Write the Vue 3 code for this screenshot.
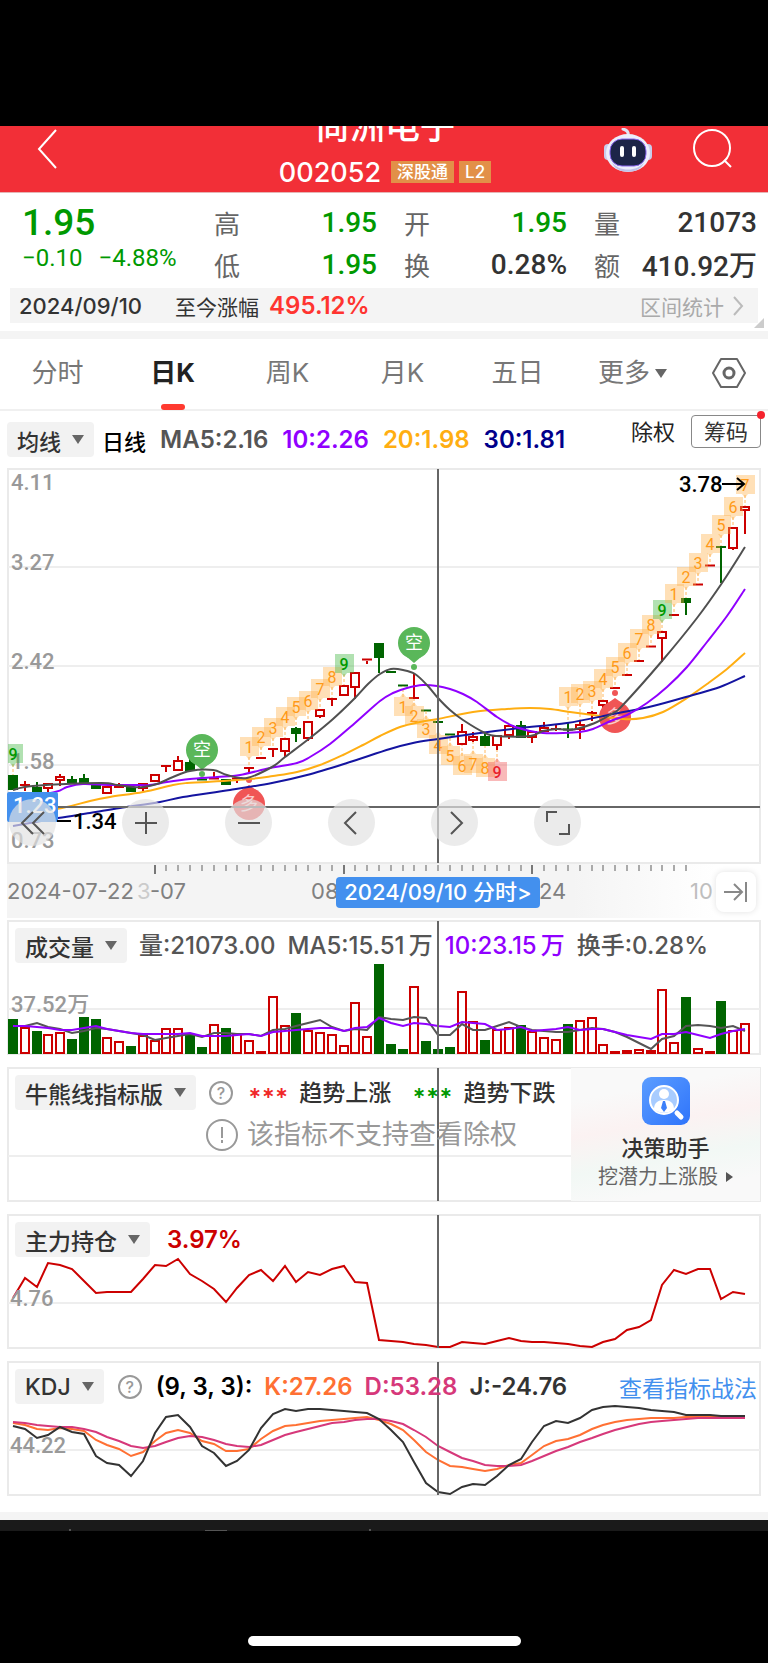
<template>
  <div class="screen">
    <header class="top">
      <button class="icon-btn" aria-label="返回">
        <svg width="22" height="42" viewBox="0 0 22 42"><path d="M20 2 3 21 20 40" fill="none" stroke="#fff" stroke-width="2" /></svg>
      </button>
      <div class="title">
        <h1>尚洲电子</h1>
        <p><span class="code">002052</span><span class="badge">深股通</span><span class="badge">L2</span></p>
      </div>
      <div class="top-right">
        <button class="icon-btn" aria-label="助手">
          <svg width="50" height="46" viewBox="0 0 50 46">
            <path d="M25 8c1-4-1-6-5-7" fill="none" stroke="#dfe3f5" stroke-width="3" stroke-linecap="round" />
            <rect x="1" y="16" width="8" height="16" rx="4" fill="#c9cdec" />
            <rect x="41" y="16" width="8" height="16" rx="4" fill="#c9cdec" />
            <ellipse cx="25" cy="25" rx="22" ry="19" fill="#eceefb" />
            <path d="M9 34c6 10 26 10 32 0-3 13-29 13-32 0z" fill="#bfc3ea" />
            <rect x="7" y="11" width="36" height="27" rx="12" fill="#1d2548" stroke="#8a66f0" stroke-width="1" />
            <rect x="17" y="18" width="4" height="11" rx="2" fill="#fff" />
            <rect x="29" y="18" width="4" height="11" rx="2" fill="#fff" />
          </svg>
        </button>
        <button class="icon-btn" aria-label="搜索">
          <svg width="42" height="42" viewBox="0 0 42 42" fill="none" stroke="#fff" stroke-width="2"><circle cx="20" cy="20" r="18" /><path d="m32 32 7 7" /></svg>
        </button>
      </div>
    </header>

    <section class="quote">
      <div class="quote-grid">
        <div class="main-price">
          <strong>1.95</strong>
          <div class="change"><span>−0.10</span><span>−4.88%</span></div>
        </div>
        <dl v-for="(col, c) in quote" :key="c">
          <div v-for="q in col" :key="q.name"><dt>{{ q.name }}</dt><dd :class="{ down: q.down }">{{ q.value }}</dd></div>
        </dl>
      </div>
      <div class="since">
        <span class="since-date">2024/09/10</span>
        <span>至今涨幅</span>
        <span class="since-pct">495.12%</span>
        <a href="#">区间统计<svg width="12" height="20" viewBox="0 0 12 20"><path d="m2 1 8 9-8 9" fill="none" stroke="#bbb" stroke-width="2" /></svg></a>
      </div>
      <i class="corner"></i>
    </section>

    <nav class="tabs">
      <button v-for="t in tabs" :key="t" :class="{ active: t === current }" @click="current = t">{{ t }}<i v-if="t === '更多'" class="tri"></i></button>
      <button aria-label="设置">
        <svg width="34" height="32" viewBox="0 0 34 32" fill="none" stroke="#666" stroke-width="2"><path d="M9 2h16l8 14-8 14H9L1 16z" stroke-linejoin="round" /><circle cx="17" cy="16" r="5" stroke-width="3" /></svg>
      </button>
    </nav>

    <div class="ma-row">
      <button class="chip">均线<i class="tri"></i></button>
      <b class="period">日线</b>
      <span class="c-gray">MA5:2.16</span><span class="c-purple">10:2.26</span><span class="c-gold">20:1.98</span><span class="c-navy">30:1.81</span>
      <div class="ma-right"><button class="plain">除权</button><button class="outlined">筹码</button></div>
    </div>

    <div class="kline">
      <svg class="chart" viewBox="7 468 754 396">
        <rect x="8" y="469" width="752" height="394" fill="#fff" stroke="#eaeaea" stroke-width="2" />
        <path d="M8 567H760M8 666H760M8 765H760" stroke="#eee" stroke-width="2" />
        <g class="axis">
          <text x="11" y="490">4.11</text><text x="11" y="570">3.27</text><text x="11" y="669">2.42</text>
          <text x="11" y="769">1.58</text><text x="11" y="848">0.73</text>
        </g>
        <g v-for="(c, i) in candles" :key="i" :stroke="c[0] ? red : green" :fill="c[0] ? '#fff' : green">
          <path v-if="c[3] < c[1]" :d="`M${x(i)} ${c[3]}V${c[1]}`" stroke-width="2" />
          <path v-if="c[4] > c[2]" :d="`M${x(i)} ${c[2]}V${c[4]}`" stroke-width="2" />
          <rect v-if="c[2] - c[1] > 3" :x="x(i) - 4" :y="c[1] + 1" width="8" :height="c[2] - c[1] - 2" stroke-width="2" />
          <path v-else :d="`M${x(i) - 5} ${(c[1] + c[2]) / 2}h10`" stroke-width="2" />
        </g>
        <g v-for="(s, k) in signals" :key="'s' + k" :class="['signal', s[3]]">
          <path v-if="!s[4]" class="lead" :d="`M${x(s[0])} ${s[1] + 20}V${candles[s[0]][3]}`" />
          <path v-else class="lead" :d="`M${x(s[0])} ${s[1]}V${candles[s[0]][4]}`" />
          <path :d="tag(s)" />
          <text :x="x(s[0])" :y="s[1] + 16">{{ s[2] }}</text>
        </g>
        <g v-for="p in pins" :key="p.x" :fill="p.color">
          <circle :cx="p.x" :cy="p.y" r="16" />
          <path v-if="p.up" :d="`M${p.x - 7} ${p.y - 14}l7-5 7 5z`" />
          <path v-else :d="`M${p.x - 7} ${p.y + 14}l7 6 7-6z`" />
          <circle :cx="p.x" :cy="p.y + (p.up ? -24 : 24)" r="3" />
          <text class="pin-text" :x="p.x" :y="p.y + 6" :opacity="p.up ? 0.7 : 1">{{ p.text }}</text>
        </g>
        <g fill="none" stroke-width="2">
          <path :d="smooth(ma20)" stroke="#ffae12" />
          <path :d="smooth(ma30)" stroke="#1414a0" />
          <path :d="smooth(ma10)" stroke="#9000ff" />
          <path :d="smooth(ma5)" stroke="#505050" />
        </g>
        <path d="M8 807H760M438 469V863" class="cross" />
        <rect x="7" y="792" width="51" height="30" rx="2" fill="#4390ee" />
        <text class="axis white" x="13" y="813">1.23</text>
        <path d="M57 821h14M722 484h22m-7-6 7 6-7 6" fill="none" stroke="#000" stroke-width="2" />
        <text class="axis black" x="73" y="829">1.34</text>
        <text class="axis black" x="679" y="492">3.78</text>
      </svg>
      <div class="tools">
        <button v-for="t in tools" :key="t.name" :aria-label="t.name">
          <svg width="26" height="26" viewBox="0 0 26 26"><path :d="t.d" fill="none" stroke="#555" stroke-width="2" /></svg>
        </button>
      </div>
    </div>

    <div class="timeline">
      <svg class="chart" viewBox="7 864 754 54">
        <path v-for="i in 46" :key="i" :d="`M${x(i + 11)} 865v${bigTicks.includes(i + 11) ? 9 : 6}`" :stroke="bigTicks.includes(i + 11) ? '#777' : '#aaa'" stroke-width="2" />
        <g class="dates">
          <text x="7" y="899">2024-07-22</text>
          <text x="137" y="899" opacity="0.35">3</text><text x="150" y="899">-07</text>
          <text x="311" y="899">08</text><text x="539" y="899">24</text>
          <text x="690" y="899" opacity="0.5">10</text>
        </g>
      </svg>
      <button class="date-pill">2024/09/10 分时&gt;</button>
      <button class="to-end" aria-label="最新">
        <svg width="24" height="20" viewBox="0 0 24 20"><path d="M0 10h18M10 2l8 8-8 8M22 0v20" fill="none" stroke="#888" stroke-width="2" /></svg>
      </button>
    </div>

    <section class="panel">
      <div class="legend volume">
        <button class="chip">成交量<i class="tri"></i></button>
        <span class="c-gray">量:21073.00</span><span class="c-gray">MA5:15.51&thinsp;万</span><span class="c-purple">10:23.15&thinsp;万</span><span class="c-gray">换手:0.28%</span>
      </div>
      <svg class="chart" viewBox="7 920 754 135">
        <rect x="8" y="921" width="752" height="133" class="frame" /><path d="M8 1009H760" class="grid" />
        <text class="axis" x="11" y="1012">37.52万</text>
        <template v-for="(v, i) in volumes" :key="i">
          <rect v-if="candles[i][0]" :x="x(i) - 4" :y="v + 1" width="8" :height="Math.max(1053 - v - 1, 1)" fill="#fff" :stroke="red" stroke-width="2" />
          <rect v-else :x="x(i) - 5" :y="v" width="10" :height="1054 - v" :fill="green" />
        </template>
        <polyline :points="line(volMa5)" stroke="#555" class="ln" />
        <polyline :points="line(volMa10)" stroke="#9000ff" class="ln" />
        <path d="M438 921V1054" class="cross" />
      </svg>
    </section>

    <section class="panel">
      <div class="legend bull">
        <button class="chip">牛熊线指标版<i class="tri"></i></button>
        <button class="help" aria-label="说明">?</button>
        <span class="stars up">∗∗∗</span><span>趋势上涨</span><span class="stars dn">∗∗∗</span><span>趋势下跌</span>
        <p class="notice">
          <svg width="32" height="32" viewBox="0 0 32 32" fill="none" stroke="#999" stroke-width="2"><circle cx="16" cy="16" r="15" /><path d="M16 8v11M16 21v3" /></svg>
          该指标不支持查看除权
        </p>
      </div>
      <svg class="chart" viewBox="7 1067 754 135">
        <rect x="8" y="1068" width="752" height="133" class="frame" /><path d="M8 1156H572" class="grid" />
        <path d="M438 1068V1201" class="cross" />
      </svg>
      <a class="helper" href="#">
        <svg width="48" height="48" viewBox="0 0 48 48">
          <defs><linearGradient id="hg" x1="0" y1="0" x2="1" y2="1"><stop offset="0" stop-color="#5b9dff" /><stop offset="1" stop-color="#2f74fb" /></linearGradient></defs>
          <rect width="48" height="48" rx="9" fill="url(#hg)" />
          <circle cx="22" cy="23" r="14" fill="#a8ccff" stroke="#fff" stroke-width="2" />
          <circle cx="22" cy="17" r="5" fill="#fff" />
          <path d="M12 32c0-6 4-9 10-9s10 3 10 9c-5 5-15 5-20 0z" fill="#fff" />
          <path d="m21 24-2 7 3 4 3-4-2-7z" fill="#3c80fa" />
          <path d="m35 36 4 4" stroke="#fff" stroke-width="5" stroke-linecap="round" />
        </svg>
        <b>决策助手</b>
        <small>挖潜力上涨股<i></i></small>
      </a>
    </section>

    <section class="panel">
      <div class="legend">
        <button class="chip">主力持仓<i class="tri"></i></button>
        <span class="c-red">3.97%</span>
      </div>
      <svg class="chart" viewBox="7 1214 754 135">
        <rect x="8" y="1215" width="752" height="133" class="frame" /><path d="M8 1303H760" class="grid" />
        <polyline :points="line(holding)" :stroke="red" class="ln" />
        <text class="axis" x="10" y="1306">4.76</text>
        <path d="M438 1215V1348" class="cross" />
      </svg>
    </section>

    <section class="panel">
      <div class="legend kdj">
        <button class="chip">KDJ<i class="tri"></i></button>
        <button class="help" aria-label="说明">?</button>
        <span class="c-black">(9, 3, 3):</span><span class="c-orange">K:27.26</span><span class="c-pink">D:53.28</span><span>J:-24.76</span>
        <a href="#">查看指标战法</a>
      </div>
      <svg class="chart" viewBox="7 1361 754 135">
        <rect x="8" y="1362" width="752" height="133" class="frame" /><path d="M8 1450H760" class="grid" />
        <text class="axis" x="10" y="1453">44.22</text>
        <polyline :points="line(kdjK)" stroke="#ff7033" class="ln" />
        <polyline :points="line(kdjD)" stroke="#d6387a" class="ln" />
        <polyline :points="line(kdjJ)" stroke="#333" class="ln" />
        <path d="M438 1362V1495" class="cross" />
      </svg>
    </section>

    <footer class="bottom">
      <div class="index-bar"><i></i><i></i><i></i></div>
      <div class="home"></div>
    </footer>
  </div>
</template>

<script setup>
import { ref } from 'vue'

const red = '#cc0000'
const green = '#006400'
const current = ref('日K')
const tabs = ['分时', '日K', '周K', '月K', '五日', '更多']

const quote = [
  [{ name: '高', value: '1.95', down: true }, { name: '低', value: '1.95', down: true }],
  [{ name: '开', value: '1.95', down: true }, { name: '换', value: '0.28%' }],
  [{ name: '量', value: '21073' }, { name: '额', value: '410.92万' }],
]

const tools = [
  { name: '快退', d: 'M13 2 2 13l11 11M24 2 13 13l11 11' },
  { name: '放大', d: 'M2 13h22M13 2v22' },
  { name: '缩小', d: 'M2 13h22' },
  { name: '左移', d: 'M17 2 6 13l11 11' },
  { name: '右移', d: 'M9 2l11 11L9 24' },
  { name: '全屏', d: 'M2 12V2h10M24 14v10H14' },
]
const bigTicks = [12, 28, 44]

// [rising, body top, body bottom, high, low]
const candles = [
  [0, 775, 790, 775, 790], [1, 784, 786, 781, 791], [0, 787, 792, 782, 792], [1, 783, 789, 783, 792],
  [1, 776, 781, 774, 786], [0, 779, 783, 776, 783], [0, 778, 783, 774, 783], [0, 785, 789, 785, 789],
  [1, 786, 794, 786, 794], [1, 786, 788, 783, 788], [0, 787, 792, 787, 792], [1, 783, 789, 783, 791],
  [1, 774, 782, 774, 782], [1, 765, 767, 765, 772], [1, 760, 771, 756, 771], [0, 762, 771, 758, 771],
  [0, 779, 780, 779, 780], [1, 777, 780, 772, 780], [0, 779, 785, 779, 785], [1, 778, 779, 778, 783],
  [1, 767, 769, 767, 773], [1, 757, 759, 757, 759], [1, 748, 750, 748, 757], [1, 738, 752, 738, 757],
  [0, 728, 734, 727, 742], [1, 721, 739, 721, 741], [1, 709, 717, 709, 718], [1, 698, 700, 698, 706],
  [1, 685, 696, 685, 696], [1, 672, 688, 672, 699], [1, 658, 661, 658, 664], [0, 643, 658, 643, 673],
  [0, 671, 673, 671, 673], [0, 685, 686, 685, 686], [1, 697, 699, 673, 699], [0, 710, 711, 710, 711],
  [0, 721, 723, 721, 723], [0, 734, 735, 734, 735], [1, 731, 745, 724, 745], [1, 736, 741, 732, 742],
  [0, 736, 746, 733, 746], [1, 735, 746, 735, 750], [1, 725, 736, 725, 739], [0, 725, 738, 721, 738],
  [1, 731, 738, 731, 743], [1, 727, 732, 722, 732], [1, 728, 730, 724, 731], [0, 729, 730, 722, 738],
  [1, 724, 730, 720, 739], [1, 712, 714, 711, 721], [1, 700, 706, 700, 708], [1, 687, 689, 687, 689],
  [1, 674, 676, 674, 676], [1, 660, 662, 660, 662], [1, 646, 647, 646, 647], [1, 631, 639, 631, 662],
  [1, 614, 616, 614, 616], [0, 598, 603, 598, 615], [1, 584, 585, 584, 585], [1, 565, 566, 565, 566],
  [0, 546, 548, 546, 583], [1, 527, 549, 527, 550], [1, 506, 511, 506, 534],
]

// [index, top, number, colour class, below candle]
const signals = [
  [0, 744, 9, 'sell'],
  ...[737, 727, 718, 707, 697, 691, 679, 667].map((y, i) => [20 + i, y, i + 1, 'count']),
  [28, 654, 9, 'sell'],
  ...[697, 706, 719, 735, 746, 756, 754, 758].map((y, i) => [33 + i, y, i + 1, 'count', true]),
  [41, 762, 9, 'buy', true],
  ...[687, 684, 681, 669, 657, 643, 629, 615].map((y, i) => [47 + i, y, i + 1, 'count']),
  [55, 600, 9, 'sell'],
  ...[584, 567, 553, 534, 515, 497, 475].map((y, i) => [56 + i, y, i + 1, 'count']),
]

const pins = [
  { x: 202, y: 750, text: '空', color: '#5ab75a' },
  { x: 414, y: 643, text: '空', color: '#5ab75a' },
  { x: 249, y: 804, text: '多', color: '#f05555', up: true },
  { x: 615, y: 717, text: '多', color: '#f05555', up: true },
]

const ma5 = [[13, 790], [33, 786], [100, 783], [117, 785], [133, 787], [143, 787], [157, 784], [173, 777], [190, 771], [213, 770], [227, 775], [247, 778], [272, 767], [285, 757], [310, 738], [333, 719], [355, 698], [368, 684], [380, 674], [391, 669], [403, 670], [415, 674], [427, 685], [438, 698], [450, 710], [463, 720], [485, 733], [497, 736], [530, 736], [543, 731], [557, 729], [570, 730], [580, 728], [597, 722], [613, 713], [622, 706], [662, 661], [697, 618], [722, 583], [745, 547]]
const ma10 = [[13, 800], [55, 792], [67, 787], [83, 784], [110, 785], [133, 785], [150, 785], [167, 782], [190, 779], [217, 777], [240, 775], [270, 768], [297, 763], [310, 757], [330, 744], [355, 723], [380, 701], [393, 693], [407, 688], [423, 685], [437, 686], [450, 689], [463, 694], [477, 702], [497, 717], [513, 726], [530, 731], [543, 733], [563, 733], [580, 732], [593, 729], [613, 720], [627, 715], [647, 703], [667, 687], [687, 667], [707, 642], [727, 616], [745, 589]]
const ma20 = [[13, 816], [62, 808], [90, 801], [110, 797], [143, 792], [173, 785], [187, 783], [207, 782], [250, 779], [273, 776], [297, 772], [320, 765], [343, 755], [363, 745], [380, 736], [400, 727], [420, 722], [438, 719], [473, 712], [507, 709], [530, 708], [550, 709], [570, 712], [593, 715], [623, 719], [643, 718], [663, 712], [687, 698], [707, 684], [727, 669], [745, 653]]
const ma30 = [[13, 826], [58, 818], [90, 813], [120, 808], [160, 802], [183, 797], [230, 790], [272, 783], [307, 775], [347, 763], [390, 749], [413, 743], [438, 739], [480, 733], [520, 728], [567, 723], [613, 714], [653, 706], [693, 695], [720, 687], [745, 676]]

const volumes = [1019, 1027, 1031, 1034, 1032, 1039, 1017, 1019, 1037, 1041, 1046, 1035, 1040, 1028, 1028, 1034, 1047, 1024, 1028, 1033, 1040, 1051, 996, 1025, 1013, 1030, 1032, 1034, 1045, 1002, 1036, 964, 1044, 1049, 986, 1041, 1049, 1047, 991, 1021, 1040, 1029, 1027, 1025, 1031, 1037, 1039, 1024, 1020, 1017, 1044, 1051, 1050, 1049, 1050, 989, 1042, 997, 1048, 1051, 1001, 1030, 1023]
const volMa5 = [1026, 1026, 1023, 1027, 1029, 1033, 1031, 1028, 1029, 1031, 1033, 1035, 1040, 1038, 1036, 1034, 1037, 1033, 1033, 1034, 1034, 1036, 1030, 1029, 1026, 1023, 1020, 1027, 1031, 1029, 1030, 1017, 1019, 1020, 1017, 1018, 1035, 1035, 1024, 1030, 1030, 1026, 1022, 1027, 1030, 1031, 1032, 1032, 1030, 1028, 1029, 1032, 1037, 1043, 1049, 1039, 1036, 1026, 1025, 1026, 1028, 1026, 1031]
const volMa10 = [1026, 1026, 1027, 1028, 1030, 1030, 1028, 1026, 1029, 1031, 1033, 1034, 1034, 1034, 1034, 1033, 1036, 1036, 1036, 1035, 1034, 1036, 1032, 1031, 1030, 1029, 1028, 1028, 1031, 1028, 1027, 1018, 1023, 1026, 1023, 1024, 1026, 1027, 1022, 1023, 1024, 1030, 1029, 1027, 1031, 1030, 1029, 1027, 1030, 1029, 1029, 1032, 1035, 1037, 1039, 1034, 1034, 1032, 1035, 1038, 1034, 1031, 1029]
const holding = [1298, 1278, 1287, 1263, 1265, 1269, 1281, 1293, 1292, 1292, 1292, 1279, 1265, 1266, 1259, 1274, 1281, 1289, 1302, 1288, 1275, 1270, 1281, 1266, 1282, 1272, 1275, 1269, 1266, 1282, 1283, 1340, 1341, 1342, 1344, 1345, 1347, 1347, 1342, 1343, 1344, 1341, 1338, 1341, 1342, 1342, 1343, 1344, 1346, 1347, 1342, 1339, 1330, 1327, 1320, 1285, 1270, 1274, 1269, 1269, 1299, 1292, 1294]
const kdjJ = [1426, 1429, 1438, 1435, 1427, 1432, 1434, 1456, 1463, 1465, 1476, 1461, 1433, 1417, 1415, 1427, 1446, 1453, 1466, 1461, 1450, 1428, 1414, 1409, 1411, 1409, 1409, 1410, 1411, 1412, 1413, 1419, 1430, 1442, 1462, 1483, 1492, 1494, 1487, 1484, 1485, 1476, 1465, 1459, 1442, 1426, 1421, 1423, 1418, 1410, 1407, 1406, 1407, 1408, 1410, 1411, 1412, 1415, 1415, 1415, 1416, 1416, 1416]
const kdjK = [1423, 1425, 1429, 1430, 1428, 1429, 1431, 1440, 1445, 1449, 1456, 1452, 1441, 1433, 1430, 1433, 1441, 1444, 1451, 1451, 1449, 1439, 1431, 1426, 1425, 1423, 1421, 1420, 1419, 1418, 1417, 1420, 1424, 1430, 1440, 1452, 1460, 1466, 1467, 1469, 1471, 1469, 1465, 1463, 1455, 1446, 1441, 1439, 1435, 1429, 1425, 1422, 1420, 1419, 1418, 1418, 1418, 1417, 1417, 1417, 1417, 1417, 1417]
const kdjD = [1422, 1423, 1425, 1426, 1427, 1427, 1429, 1432, 1437, 1441, 1446, 1448, 1446, 1442, 1438, 1436, 1437, 1440, 1444, 1446, 1447, 1445, 1440, 1435, 1432, 1429, 1426, 1423, 1422, 1420, 1419, 1419, 1421, 1424, 1430, 1437, 1446, 1452, 1458, 1461, 1465, 1466, 1466, 1465, 1461, 1456, 1451, 1447, 1442, 1438, 1434, 1430, 1427, 1424, 1422, 1421, 1420, 1419, 1418, 1418, 1418, 1418, 1418]

function x(i) { return Math.round(13 + (732 * i) / 62) }
function line(ys) { return ys.map((y, i) => `${x(i)},${y}`).join(' ') }

function smooth(p) {
  let d = `M${p[0]}`
  for (let i = 0; i < p.length - 1; i++) {
    const a = p[i - 1] || p[i]
    const b = p[i]
    const c = p[i + 1]
    const e = p[i + 2] || c
    d += `C${b[0] + (c[0] - a[0]) / 6} ${b[1] + (c[1] - a[1]) / 6} ${c[0] - (e[0] - b[0]) / 6} ${c[1] - (e[1] - b[1]) / 6} ${c}`
  }
  return d
}

function tag([i, y, , , below]) {
  const l = Math.max(x(i) - 9, 8)
  const r = x(i) + 10
  const m = x(i)
  return below
    ? `M${l} ${y}H${m - 3}l3-4 3 4H${r}v19H${l}z`
    : `M${l} ${y}H${r}v19H${m + 3}l-3 4-3-4H${l}z`
}
</script>

<style>
body { margin: 0; background: #000; }
</style>

<style scoped>
.screen { padding-top: 126px; background: #000; color: #333; font-family: Inter, "Noto Sans CJK SC", sans-serif; font-size: 23px; }
h1, p, dl, dd { margin: 0; }
button { font: inherit; color: inherit; background: none; border: 0; padding: 0; cursor: pointer; }
a { text-decoration: none; }
svg { display: block; }

.top { display: grid; grid-template-columns: 1fr auto 1fr; grid-template-rows: 66px; height: 67px; padding: 0 34px 0 36px; background: #f22f37; color: #fff; overflow: hidden; border-bottom: 1px solid #e5b5b5; box-sizing: border-box; }
.icon-btn { align-self: start; justify-self: start; margin-top: 2px; }
.title { display: flex; flex-direction: column; align-items: center; justify-content: flex-end; height: 66px; }
.title h1 { flex: none; font-size: 35px; line-height: 44px; margin-bottom: 4px; font-weight: 500; }
.title p { display: flex; align-items: center; gap: 5px; height: 40px; flex: none; }
.code { font-size: 27px; font-weight: 500; margin-right: 5px; }
.badge { background: #e29048; font-size: 17px; line-height: 22px; padding: 0 6px; font-weight: 500; }
.top-right { display: flex; justify-content: flex-end; gap: 39px; }

.quote { position: relative; background: #fff; padding-bottom: 8px; border-bottom: 8px solid #f4f4f4; }
.quote-grid { display: grid; grid-template-columns: 165fr 163fr 163fr 163fr; gap: 27px; padding: 8px 11px 3px 22px; }
.main-price { color: #009900; font-family: Roboto, sans-serif; }
.main-price strong { display: block; font-size: 37px; line-height: 44px; font-weight: 500; }
.change { display: flex; gap: 16px; font-size: 24px; line-height: 26px; white-space: nowrap; }
.quote dl div { display: flex; justify-content: space-between; align-items: center; height: 42px; }
.quote dt { font-size: 26px; color: #666; }
.quote dd { font: 500 28px Roboto, "Noto Sans CJK SC", sans-serif; white-space: nowrap; }
.quote dd.down { color: #009900; }
.since { display: flex; align-items: center; height: 35px; margin: 0 10px; padding: 0 14px 0 9px; background: #f4f4f4; font-size: 21px; }
.since-date { font-size: 22px; font-weight: 500; margin-right: 33px; }
.since-pct { color: #ff3430; font-size: 24px; font-weight: 600; margin-left: 10px; }
.since a { display: flex; align-items: center; gap: 8px; margin-left: auto; color: #aaa; }
.corner { position: absolute; right: 4px; bottom: 3px; border-left: 10px solid transparent; border-bottom: 10px solid #ccc; }

.tabs { display: grid; grid-template-columns: repeat(6, 115fr) 78fr; height: 72px; background: #fff; border-bottom: 2px solid #f0f0f0; box-sizing: border-box; }
.tabs button { position: relative; display: flex; align-items: center; justify-content: center; font-size: 26px; line-height: 68px; padding-bottom: 3px; color: #777; }
.tabs .active { color: #222; font-weight: 700; }
.tabs .active::after { content: ""; position: absolute; bottom: 0; width: 24px; height: 6px; border-radius: 3px; background: #ff3a30; }
.tabs .tri { margin-left: 5px; }
.tri { display: inline-block; border: 6px solid transparent; border-top: 9px solid #666; border-bottom: 0; }

.ma-row { display: flex; align-items: center; gap: 14px; height: 57px; padding: 0 7px; background: #fff; font-weight: 500; white-space: nowrap; }
.ma-row span { font-size: 24px; font-weight: 600; }
.period { color: #000; font-size: 22px; margin-left: -6px; font-weight: 500; }
.chip { display: flex; align-items: center; gap: 11px; height: 35px; padding: 0 10px; border-radius: 4px; background: #f2f2f2; color: #333; font-weight: 500; white-space: nowrap; }
.ma-row .chip { font-size: 22px; }
.ma-right { display: flex; align-items: center; align-self: flex-start; gap: 16px; margin: 4px 0 0 auto; }
.plain { font-size: 22px; line-height: 30px; color: #222; font-weight: 400; }
.outlined { position: relative; font-size: 22px; line-height: 30px; height: 33px; padding: 0 12px; border: 1px solid #888; border-radius: 4px; font-weight: 400; }
.outlined::after { content: ""; position: absolute; right: -5px; top: -5px; width: 8px; height: 8px; border-radius: 50%; background: #f5222d; }

.c-gray { color: #555; }
.c-purple { color: #9000ff; }
.c-gold { color: #ffae12; }
.c-navy { color: #00008b; }
.c-red { color: #cc0000; }
.c-black { color: #000; }
.c-orange { color: #ff7033; }
.c-pink { color: #d6387a; }

.kline, .timeline { position: relative; background: #fff; padding: 0 7px; }
.chart { width: 100%; height: auto; }
.axis { font-family: Roboto, "Noto Sans CJK SC", sans-serif; font-size: 22px; font-weight: 500; fill: #999; }
.axis.white { fill: #fff; }
.axis.black { fill: #000; }
.signal path { fill: rgba(255, 178, 76, 0.4); }
.signal text { font-family: Roboto, sans-serif; font-size: 16px; text-anchor: middle; fill: #ff9a18; }
.signal.sell path { fill: rgba(60, 180, 60, 0.4); }
.signal.sell text { fill: #009900; font-weight: 500; }
.signal.buy path { fill: rgba(240, 80, 80, 0.4); }
.signal.buy text { fill: #e8222c; font-weight: 500; }
.signal .lead { stroke: #ffb860; stroke-width: 1; stroke-dasharray: 3 2; }
.pin-text { fill: #fff; font-size: 18px; text-anchor: middle; }
.tools { position: absolute; left: 9px; bottom: 18px; display: flex; gap: 56px; }
.tools button { display: grid; place-items: center; width: 47px; height: 47px; border-radius: 50%; background: rgba(226, 226, 226, 0.68); }
.tools button:first-child { margin-right: 10px; }

.timeline .chart { background: linear-gradient(90deg, #f4f4f4 75%, #fff 94%); }
.dates { font-size: 22px; fill: #808080; }
.date-pill { position: absolute; left: 336px; top: 13px; width: 204px; height: 31px; border-radius: 4px; background: #4390ee; color: #fff; font-size: 22px; font-weight: 500; line-height: 31px; white-space: nowrap; }
.to-end { position: absolute; right: 12px; top: 8px; width: 40px; height: 40px; display: grid; place-items: center; border-radius: 8px; background: #fff; box-shadow: 0 0 6px rgba(0, 0, 0, 0.12); }

.panel { display: grid; padding: 2px 7px 10px; background: #fff; }
.panel > * { grid-area: 1 / 1; }
.panel > .chart { pointer-events: none; }
.legend { z-index: 1; align-self: start; display: flex; align-items: center; gap: 12px; padding: 8px 4px 0 8px; font-weight: 500; white-space: nowrap; }
.legend span { font-size: 24px; line-height: 34px; font-weight: 600; }
.volume span { font-weight: 500; }
.legend .c-red { margin-left: 5px; }
.frame { fill: none; stroke: #eaeaea; stroke-width: 2; }
.grid { stroke: #eee; stroke-width: 2; }
.ln { fill: none; stroke-width: 2; }
.cross { stroke: #666; stroke-width: 2; }
.help { width: 24px; height: 24px; border: 2px solid #999; border-radius: 50%; color: #999; font-size: 16px; line-height: 18px; margin: 0 2px; }
.bull { flex-wrap: wrap; row-gap: 7px; column-gap: 11px; margin-right: 189px; }
.bull span { font-size: 23px; font-weight: 500; }
.bull .stars { font: 700 16px "DejaVu Sans", sans-serif; }
.stars.up { color: #f02828; margin-left: 2px; }
.stars.dn { color: #009900; margin-left: 10px; }
.notice { display: flex; align-items: center; justify-content: center; flex-basis: 100%; gap: 9px; font-size: 27px; line-height: 36px; color: #999; font-weight: 400; padding-left: 140px; }
.helper { z-index: 1; justify-self: end; display: flex; flex-direction: column; align-items: center; width: 189px; margin: 1px; padding-top: 9px; box-sizing: border-box; color: #333; background: linear-gradient(170deg, #f9f9f9 20%, #fbf2f2 42%, #f2f8f5 65%, #f9f9f9 85%); }
.helper b { font-size: 22px; line-height: 30px; font-weight: 500; margin-top: 8px; }
.helper small { display: flex; align-items: center; gap: 8px; font-size: 20px; line-height: 28px; color: #666; }
.helper i { border: 5px solid transparent; border-left: 7px solid #555; border-right: 0; }
.kdj a { margin-left: auto; color: #4390ee; font-weight: 400; }

.bottom { border-top: 8px solid #f4f4f4; box-shadow: 0 -8px 0 #fff; margin-top: 6px; height: 142px; }
.index-bar { display: flex; align-items: flex-end; height: 11px; background: #1a1a1a; padding-left: 69px; }
.index-bar i { width: 2px; height: 2px; background: #555; }
.index-bar i:nth-child(2) { width: 22px; margin: 0 142px 0 134px; height: 1px; }
.home { width: 273px; height: 10px; margin: 105px auto 0; border-radius: 5px; background: #fff; }
</style>
